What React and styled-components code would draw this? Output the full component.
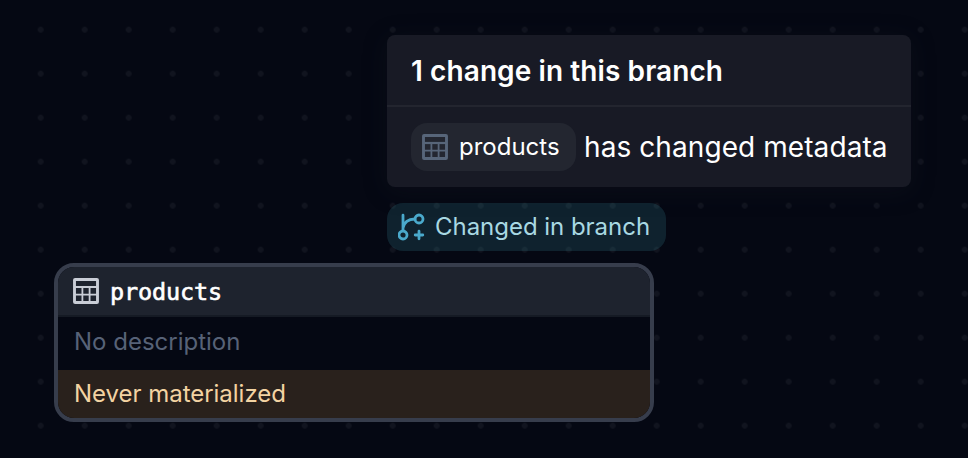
import React from "react";
import styled, { createGlobalStyle } from "styled-components";

const Global = createGlobalStyle`
  * { box-sizing: border-box; }
  body { margin: 0; background: #050813; font-family: Inter, sans-serif; }
`;

const Canvas = styled.main`
  position: relative;
  width: 968px;
  height: 458px;
  overflow: hidden;
  background-color: #050813;
  background-image: radial-gradient(circle at 22px 22px, #11141f 2.6px, transparent 3.2px);
  background-size: 44px 44px;
  background-position: 18.7px 7.7px;
`;

const Popover = styled.section`
  position: absolute;
  left: 387px;
  top: 35px;
  width: 524px;
  height: 152px;
  border-radius: 8px;
  background: #181a25;
  color: #fff;
  box-shadow: 0 4px 24px rgba(24, 26, 37, 0.3);
`;

const PopoverTitle = styled.h2`
  margin: 0;
  height: 72px;
  padding: 0 24px;
  border-bottom: 2px solid #23252f;
  font-size: 28px;
  font-weight: 600;
  line-height: 73px;
  letter-spacing: 0.09px;
  white-space: nowrap;
`;

const ChangeRow = styled.div`
  display: flex;
  align-items: center;
  gap: 8px;
  height: 80px;
  padding: 0 24px;
  font-size: 28px;
  line-height: 40px;
  white-space: nowrap;
`;

const Tag = styled.span`
  display: flex;
  align-items: center;
  flex: none;
  gap: ${(p) => p.$gap}px;
  width: ${(p) => p.$width}px;
  height: 48px;
  padding: 0 11px;
  border-radius: 16px;
  background: ${(p) => p.$background};
  color: ${(p) => p.$color};
  font-size: 24px;
  line-height: 48px;
  white-space: nowrap;
`;

const BranchAnchor = styled.div`
  position: absolute;
  left: 387px;
  top: 203px;
`;

const Node = styled.article`
  position: absolute;
  left: 54px;
  top: 263px;
  width: 600px;
  height: 159px;
  border: 4px solid #373d4c;
  border-radius: 20px;
  overflow: hidden;
  background: #050813;
`;

const NodeHeader = styled.header`
  display: flex;
  align-items: center;
  gap: 11px;
  height: 50px;
  padding: 0 15px;
  border-bottom: 2px solid #151a24;
  background: #1e232e;
  color: #fff;
`;

const NodeName = styled.span`
  padding-top: 2px;
  font: 400 23.5px/48px "DejaVu Sans Mono", monospace;
  letter-spacing: -0.15px;
  -webkit-text-stroke: 0.6px currentColor;
`;

const NodeRow = styled.div`
  height: ${(p) => p.$height}px;
  padding: 0 16px;
  background: ${(p) => p.$background};
  color: ${(p) => p.$color};
  font-size: 24px;
  line-height: ${(p) => p.$line}px;
  white-space: nowrap;
`;

const Label = styled.span`
  letter-spacing: ${(p) => p.$spacing || 0}px;
`;

const Icon = styled.svg`
  display: block;
  flex: none;
`;

function TableIcon({ color }) {
  return (
    <Icon width="26" height="26" viewBox="0 0 26 26" fill="none" stroke={color}>
      <rect x="1.5" y="1.5" width="23" height="23" rx="0.6" strokeWidth="2.9" />
      <path d="M2 9h22" strokeWidth="2.2" />
      <path d="M2 16.7h22M9.4 9v15M16.6 9v15" strokeWidth="1.8" />
    </Icon>
  );
}

function BranchIcon() {
  return (
    <Icon width="28" height="28" viewBox="0 0 28 28" fill="none" stroke="#4aa9cb" strokeWidth="2.8" strokeLinecap="round">
      <circle cx="5" cy="22" r="4" />
      <circle cx="21" cy="6" r="4" />
      <path d="M5 2.2v15.5M5 15C6 9.5 10 6.2 17 6M21 18.2v7.6M17.2 22h7.6" />
    </Icon>
  );
}

export default function App() {
  return (
    <>
      <Global />
      <Canvas>
        <Popover>
          <PopoverTitle>1 change in this branch</PopoverTitle>
          <ChangeRow>
            <Tag $width={165} $gap={11} $background="#232630" $color="#fff">
              <TableIcon color="#576579" />
              <Label>products</Label>
            </Tag>
            <Label $spacing={0.08}>has changed metadata</Label>
          </ChangeRow>
        </Popover>
        <BranchAnchor>
          <Tag $width={279} $gap={9} $background="rgba(57, 138, 154, 0.2)" $color="#a8d8e2">
            <BranchIcon />
            <Label $spacing={-0.03}>Changed in branch</Label>
          </Tag>
        </BranchAnchor>
        <Node>
          <NodeHeader>
            <TableIcon color="#c9cdd6" />
            <NodeName>products</NodeName>
          </NodeHeader>
          <NodeRow $height={53} $line={50} $background="#050813" $color="#576277">
            <Label>No description</Label>
          </NodeRow>
          <NodeRow $height={48} $line={48} $background="#29211c" $color="#f3d3a2">
            <Label $spacing={-0.03}>Never materialized</Label>
          </NodeRow>
        </Node>
      </Canvas>
    </>
  );
}
